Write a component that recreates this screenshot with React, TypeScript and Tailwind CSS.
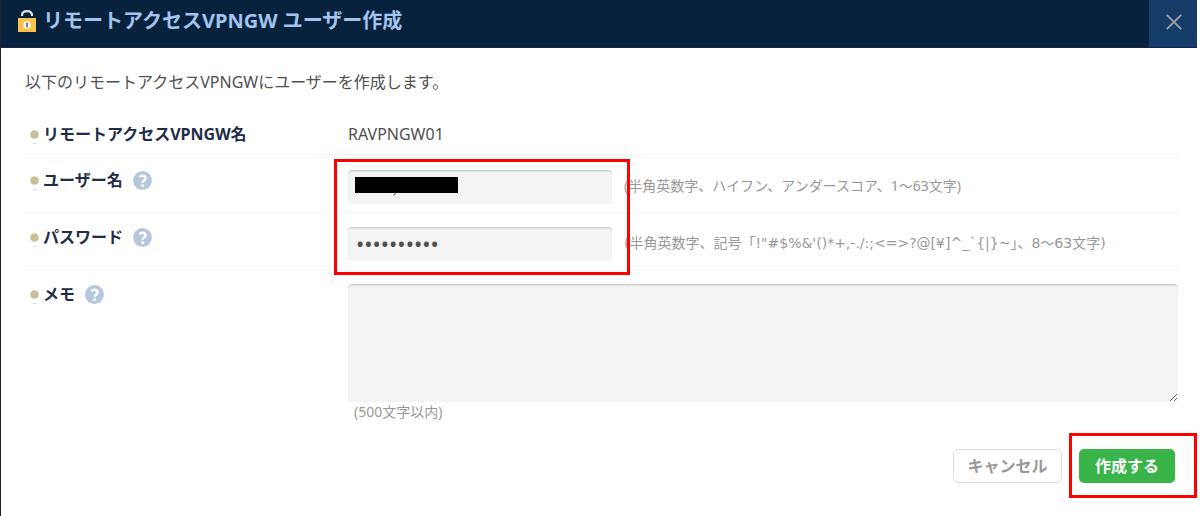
import React from "react";

function LockIcon() {
  return (
    <svg width="18" height="24" viewBox="0 0 18 24" aria-hidden="true">
      <path d="M4 8V7.6C4 4.8 6 3.2 9 3.2s5 1.6 5 4.4V8" fill="none" stroke="#dfe1e4" strokeWidth="2.2" />
      <rect x="0" y="10" width="18" height="14" fill="#fcc24e" />
      <circle cx="9" cy="17" r="3.8" fill="#f4f3f0" />
      <rect x="8.2" y="14.6" width="1.7" height="4.8" fill="#6b7078" />
    </svg>
  );
}

function Bullet() {
  return (
    <svg width="9" height="16" viewBox="0 0 9 16" className="mt-1 shrink-0" aria-hidden="true">
      <circle cx="4.5" cy="6.5" r="4.3" fill="#c8c197" />
      <rect x="2.5" y="15" width="4" height="1" fill="#c4e0f4" />
    </svg>
  );
}

function HelpButton({ label }: { label: string }) {
  return (
    <button type="button" aria-label={label} className="mt-[1px] ml-[10px] h-[19px] w-[19px] shrink-0">
      <svg width="19" height="19" viewBox="0 0 19 19" aria-hidden="true">
        <circle cx="9.5" cy="9.5" r="9.4" fill="#b4c7db" />
        <path
          d="M6.4 6.2C7.3 5.2 8.3 4.7 9.5 4.7c1.9 0 3 1 3 2.4 0 1.2-.6 1.8-1.5 2.4-.9.6-1.3 1.1-1.3 2.2"
          fill="none"
          stroke="#fff"
          strokeWidth="2.5"
        />
        <circle cx="9.6" cy="14.6" r="1.5" fill="#fff" />
      </svg>
    </button>
  );
}

function RowLabel({ text, htmlFor, help }: { text: string; htmlFor?: string; help?: boolean }) {
  const style = "ml-1 text-base leading-5 font-bold text-[#1f2d4a]";
  return (
    <div className="flex w-[323px] shrink-0 items-start pl-[5px]">
      <Bullet />
      {htmlFor ? (
        <label htmlFor={htmlFor} className={style}>
          {text}
        </label>
      ) : (
        <span className={style}>{text}</span>
      )}
      {help && <HelpButton label={text + "のヘルプ"} />}
    </div>
  );
}

const field =
  "rounded-[4px] border-t border-t-[#cfcfcf] bg-[#f4f4f4] shadow-[inset_0_1px_1px_#dddddd] outline-none";

export default function App() {
  return (
    <main className="border-l border-[#1c2433] bg-white pr-[3px] pb-[18px] font-['Noto_Sans','Noto_Sans_CJK_JP',sans-serif] text-[#505050]">
      <header className="flex h-12 items-stretch justify-between border-b border-[#10254e] bg-[#08223d]">
        <div className="flex items-start gap-[7px] pt-2 pl-[17px]">
          <LockIcon />
          <h1 className="text-xl leading-[26px] font-bold text-[#a3c3ec]">リモートアクセスVPNGW ユーザー作成</h1>
        </div>
        <button type="button" aria-label="閉じる" className="flex w-12 items-center justify-center bg-[#153c68]">
          <svg width="16" height="16" viewBox="0 0 16 16" className="mr-[-2px] mb-1" aria-hidden="true">
            <path d="M.8.8l14.4 14.4M15.2.8L.8 15.2" stroke="#a0a0a0" strokeWidth="1.9" />
          </svg>
        </button>
      </header>

      <form onSubmit={(e) => e.preventDefault()} className="pr-[19px] pl-6">
        <p className="pt-[22px] text-base leading-6">以下のリモートアクセスVPNGWにユーザーを作成します。</p>

        <div className="mt-[30px] flex border-b border-[#eff5fa] pb-[10px]">
          <RowLabel text="リモートアクセスVPNGW名" />
          <span className="text-base leading-5">RAVPNGW01</span>
        </div>

        <div className="relative">
          <div className="flex h-[58px] border-b border-[#eff5fa] pt-[15px]">
            <RowLabel text="ユーザー名" htmlFor="user" help />
            <div className="relative h-[34px] w-[264px] shrink-0">
              <input id="user" type="text" className={"block h-[34px] w-full px-2 text-sm " + field} />
              <svg width="103" height="18" viewBox="0 0 103 18" className="absolute top-[7px] left-[7px]" overflow="visible" aria-hidden="true">
                <path d="M40.8 15.5L39.4 18h-1" fill="none" stroke="#666" strokeWidth="1" />
                <rect width="103" height="16" fill="#000" />
              </svg>
            </div>
            <span className="mt-[6px] ml-3 text-sm leading-5 whitespace-nowrap text-[#999]">
              (半角英数字、ハイフン、アンダースコア、1～63文字)
            </span>
          </div>

          <div className="flex h-[57px] border-b border-[#eff5fa] pt-[14px]">
            <RowLabel text="パスワード" htmlFor="password" help />
            <input
              id="password"
              type="password"
              defaultValue="password01"
              className={"h-[34px] w-[264px] shrink-0 px-2 pb-1 text-[22px] " + field}
            />
            <span className="mt-[6px] ml-3 font-['DejaVu_Sans','Noto_Sans_CJK_JP',sans-serif] text-sm leading-5 whitespace-nowrap text-[#999]">
              {"(半角英数字、記号「!\"#$%&'()*+,-./:;<=>?@[¥]^_`{|}~」、8～63文字)"}
            </span>
          </div>
          <div className="pointer-events-none absolute top-1 left-[309px] h-[116px] w-[296px] border-3 border-[#fe0000]" />
        </div>

        <div className="flex pt-[14px]">
          <RowLabel text="メモ" htmlFor="memo" help />
          <div className="min-w-0 flex-1">
            <textarea id="memo" className={"block h-[118px] w-full resize px-2 " + field} />
            <p className="pl-[6px] text-sm leading-5 text-[#999]">(500文字以内)</p>
          </div>
        </div>

        <div className="mt-[27px] flex justify-end gap-[17px] pr-[3px] pb-4">
          <button
            type="button"
            className="h-[34px] w-[109px] rounded-[5px] border border-[#dedede] bg-white text-base leading-5 font-bold text-[#999]"
          >
            キャンセル
          </button>
          <div className="relative">
            <button
              type="submit"
              className="h-[34px] w-24 rounded-[5px] bg-[#38b449] text-base leading-5 font-bold text-white"
            >
              作成する
            </button>
            <div className="pointer-events-none absolute -top-4 -left-[10px] h-[65px] w-32 border-3 border-[#fe0000]" />
          </div>
        </div>
      </form>
    </main>
  );
}
